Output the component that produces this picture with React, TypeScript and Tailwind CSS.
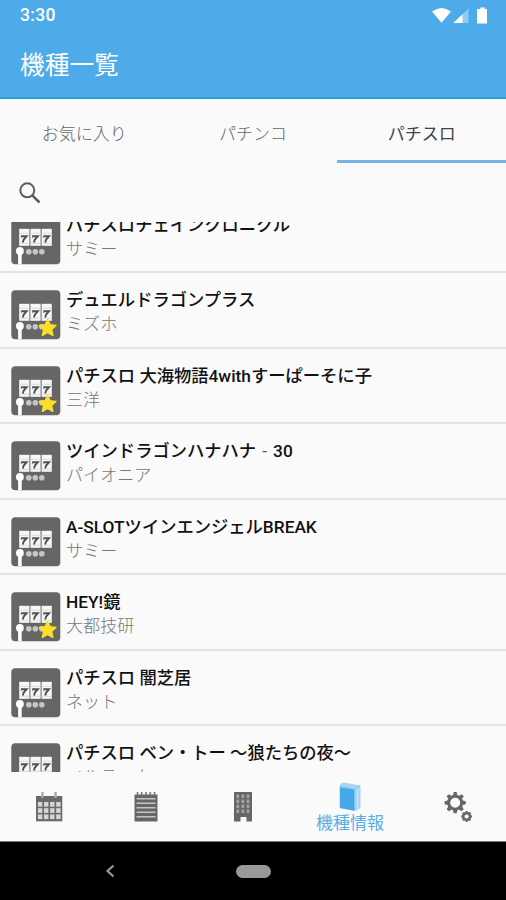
import React from 'react';

const machines = [
  { name: 'パチスロチェインクロニクル', maker: 'サミー', favorite: false },
  { name: 'デュエルドラゴンプラス', maker: 'ミズホ', favorite: true },
  { name: 'パチスロ 大海物語4withすーぱーそに子', maker: '三洋', favorite: true },
  { name: 'ツインドラゴンハナハナ‐30', maker: 'パイオニア', favorite: false },
  { name: 'A-SLOTツインエンジェルBREAK', maker: 'サミー', favorite: false },
  { name: 'HEY!鏡', maker: '大都技研', favorite: true },
  { name: 'パチスロ 闇芝居', maker: 'ネット', favorite: false },
  { name: 'パチスロ ベン・トー ～狼たちの夜～', maker: 'ベルテック', favorite: false },
];

function MachineName({ name }: { name: string }) {
  const [head, tail] = name.split('‐');
  if (tail === undefined) return <>{name}</>;
  return (
    <>
      {head}
      <span className="inline-block w-[17px] text-center font-normal text-[#555]">‐</span>
      {tail}
    </>
  );
}

function SlotIcon({ favorite }: { favorite: boolean }) {
  return (
    <svg className="h-[50px] w-[50px] shrink-0" viewBox="0 0 50 50">
      <rect x="0.3" y="0.3" width="49" height="49" rx="4" fill="#666" />
      {[8.2, 19.4, 30.6].map((x) => (
        <g key={x}>
          <rect x={x} y="13.8" width="10.2" height="17" fill="#f7f7f7" />
          <path d={`M${x} 18.300h10.200M${x} 28.300h10.200`} stroke="#d4d4d4" strokeWidth="0.8" />
          <path
            d={`M${x + 1.8} 21.300h5.600l-2.900 3.200-.9 3`}
            fill="none"
            stroke="#505050"
            strokeWidth="1.900"
          />
          <path d={`M${x + 2.1} 20.500v2.600`} stroke="#777" strokeWidth="0.8" />
        </g>
      ))}
      <circle cx="8.900" cy="36" r="3.900" fill="#fff" />
      <path d="M8.900 37v12.300" stroke="#fff" strokeWidth="3.600" />
      <g fill="#c6c6c6">
        <circle cx="17.800" cy="36.800" r="2.800" />
        <circle cx="24.300" cy="36.800" r="2.800" />
        <circle cx="30.800" cy="36.800" r="2.800" />
      </g>
      {favorite && (
        <path
          d="M36.600 29.200l2.400 5.600 5.900.6-4.400 4 1.300 5.900-5.200-3-5.200 3 1.300-5.900-4.400-4 5.900-.6z"
          fill="#fbe02a"
          stroke="#fbe02a"
          strokeWidth="1.500"
          strokeLinejoin="round"
        />
      )}
    </svg>
  );
}

function Calendar() {
  return (
    <svg className="h-[30px] w-7" viewBox="0 0 28 30">
      <path d="M1 4h26.300v25.300H1z" fill="#6a6a6a" />
      <path d="M7.500 0v6M20.500 0v6" stroke="#aaa" strokeWidth="2.400" />
      <g fill="#d6d6d6">
        {[10, 16.2, 22.4].map((y) =>
          [2.9, 9, 15.1, 21.2].map((x) => <rect key={`${x}-${y}`} x={x} y={y} width="4.400" height="4.700" />),
        )}
      </g>
    </svg>
  );
}

function Notepad() {
  return (
    <svg className="h-[30px] w-6" viewBox="0 0 24 30">
      <path d="M.5 2.500h23v27H.5z" fill="#666" />
      <path d="M3.500 0v4M7.700 0v4M12 0v4M16.300 0v4M20.500 0v4" stroke="#777" strokeWidth="1.600" />
      <path d="M2.500 6.800h19M2.500 11.300h19M2.500 15.800h19M2.500 20.300h19M2.500 24.800h19" stroke="#c4c4c4" strokeWidth="1.500" />
    </svg>
  );
}

function Building() {
  return (
    <svg className="h-[30px] w-5" viewBox="0 0 20 30">
      <path d="M1 0h18v29.500h-5.500V25h-6v4.500H1z" fill="#666" />
      <g fill="#a2a2a2">
        {[2.5, 7.5, 12.5, 17.5].map((y) =>
          [3.4, 8.500, 13.6].map((x) => <rect key={`${x}-${y}`} x={x} y={y} width="2.800" height="3.600" />),
        )}
      </g>
    </svg>
  );
}

function Book() {
  return (
    <svg className="h-[30px] w-[22px]" viewBox="0 0 22 30">
      <path d="M.5 4Q1.500.7 5 .5l16.500 3V26l-5.500 3L.5 26z" fill="#a9d4f2" />
      <path d="M1 5l14.500 2.400v21.400L1 26z" fill="#45a9e8" />
      <path d="M1 4.800L15.600 7.300l5.500-3.500" stroke="#83c4ee" fill="none" />
      <path d="M18.600 6v21" stroke="#c9e5f8" />
    </svg>
  );
}

function Gears() {
  const angles = [0, 45, 90, 135, 180, 225, 270, 315];
  return (
    <svg className="h-[30px] w-7" viewBox="0 0 28 30">
      <g transform="translate(11.200 10.700)">
        <circle r="6.500" fill="none" stroke="#666" strokeWidth="3" />
        {angles.map((a) => (
          <path key={a} d="M-2.200-7.300L-1.500-10.600H1.500L2.200-7.300z" fill="#666" transform={`rotate(${a})`} />
        ))}
      </g>
      <g transform="translate(22.600 24.500)">
        <circle r="3.400" fill="none" stroke="#6a6a6a" strokeWidth="2.700" />
        {angles.map((a) => (
          <path key={a} d="M-1.300-4.300L-.9-5.400H.9L1.300-4.300z" fill="#6a6a6a" transform={`rotate(${a})`} />
        ))}
      </g>
    </svg>
  );
}

export default function App() {
  return (
    <div className="flex h-[900px] w-[506px] flex-col overflow-hidden bg-[#fafafa] font-['Roboto','Noto_Sans_CJK_JP',sans-serif]">
      <header className="h-[99px] shrink-0 border-b-2 border-[#2ba0dc] bg-[#4eabe9] text-white">
        <div className="flex h-[31px] items-center justify-between pr-[17px] pl-5">
          <span className="text-[17.500px] leading-[31px] font-medium tracking-[0.3px]">3:30</span>
          <svg className="h-[18px] w-[57px]" viewBox="0 0 57 18">
            <path d="M0 4.500Q9.500-2.500 19 4.500L9.500 15.800z" fill="#fff" />
            <path d="M21.500 16L36.500 1.500V16z" fill="#91cbf2" />
            <path d="M21.500 16L30.500 7.300V16z" fill="#fff" />
            <path d="M46 2h2.300V.5h4.500V2H55v14.500H45V2z" fill="#fff" />
          </svg>
        </div>
        <h1 className="pt-[17px] pl-5 text-[24.700px] leading-[36px] font-normal">機種一覧</h1>
      </header>

      <nav className="grid h-[64px] shrink-0 grid-cols-3 text-center text-[17px] font-light text-[#666]">
        <span className="h-[64px] leading-[71px]">お気に入り</span>
        <span className="h-[64px] leading-[71px]">パチンコ</span>
        <span className="h-[64px] border-b-[3px] border-[#75b5e3] leading-[71px] font-normal text-[#444]">パチスロ</span>
      </nav>

      <div className="flex h-[59px] shrink-0 items-center pl-[19px]">
        <svg className="h-[22px] w-[22px]" viewBox="0 0 22 22" fill="none" stroke="#5c5c5c">
          <circle cx="8.300" cy="8.300" r="7" strokeWidth="2" />
          <path d="M13.300 13.300l7.200 7.200" strokeWidth="2.500" />
        </svg>
      </div>

      <main className="h-[550px] shrink-0 overflow-hidden">
        <ul className="-mt-[24.300px]">
          {machines.map((m) => (
            <li key={m.name} className="flex h-[75.500px] border-b-2 border-[#e4e4e4] pl-[11px]">
              <div className="pt-[17px]">
                <SlotIcon favorite={m.favorite} />
              </div>
              <div className="pt-[15px] pl-[5px] leading-6 whitespace-nowrap">
                <div className="text-[17.300px] font-medium text-[#111]">
                  <MachineName name={m.name} />
                </div>
                <div className="text-[17.100px] font-light text-[#777]">{m.maker}</div>
              </div>
            </li>
          ))}
        </ul>
      </main>

      <footer className="flex h-[70px] shrink-0 border-b border-[#777]">
        <div className="flex w-[97px] justify-center pt-5"><Calendar /></div>
        <div className="flex w-[97px] justify-center pt-5"><Notepad /></div>
        <div className="flex w-[97px] justify-center pt-5"><Building /></div>
        <div className="flex w-[118px] flex-col items-center pt-[10px] text-[17px] leading-[23px] text-[#5bade5]">
          <Book />
          <span>機種情報</span>
        </div>
        <div className="flex w-[97px] justify-center pt-5"><Gears /></div>
      </footer>

      <div className="flex h-[58px] shrink-0 items-center bg-black pl-[105px]">
        <svg className="h-[14px] w-[10px]" viewBox="0 0 10 14" fill="none" stroke="#999" strokeWidth="2.200">
          <path d="M8.500 1.500L2.500 7l6 5.500" />
        </svg>
        <div className="ml-[121px] h-[13px] w-[35px] rounded-full bg-[#999]" />
      </div>
    </div>
  );
}
